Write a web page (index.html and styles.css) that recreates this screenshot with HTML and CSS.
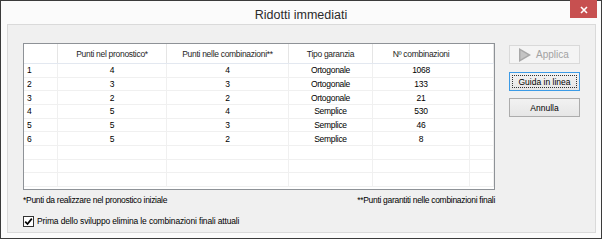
FILE: index.html
```html
<!DOCTYPE html>
<html lang="it">
<head>
    <meta charset="UTF-8">
    <title>Ridotti immediati</title>
    <link rel="stylesheet" href="styles.css">
</head>
<body>

    <div class="window">
        <div class="titlebar">
            <span class="title">Ridotti immediati</span>
            <button class="close" title="Chiudi">
                <svg width="8" height="8" viewBox="0 0 8 8"><path d="M1 1 L7 7 M7 1 L1 7" stroke="#fff" stroke-width="1.6"/></svg>
            </button>
        </div>

        <div class="client">
            <div class="main">
                <div class="left">
                    <div class="grid">
                        <div class="row head">
                            <div class="cell"></div>
                            <div class="cell">Punti nel pronostico*</div>
                            <div class="cell">Punti nelle combinazioni**</div>
                            <div class="cell">Tipo garanzia</div>
                            <div class="cell">Nº combinazioni</div>
                            <div class="cell"></div>
                        </div>
                        <div class="row">
                            <div class="cell">1</div><div class="cell">4</div><div class="cell">4</div>
                            <div class="cell">Ortogonale</div><div class="cell">1068</div><div class="cell"></div>
                        </div>
                        <div class="row">
                            <div class="cell">2</div><div class="cell">3</div><div class="cell">3</div>
                            <div class="cell">Ortogonale</div><div class="cell">133</div><div class="cell"></div>
                        </div>
                        <div class="row">
                            <div class="cell">3</div><div class="cell">2</div><div class="cell">2</div>
                            <div class="cell">Ortogonale</div><div class="cell">21</div><div class="cell"></div>
                        </div>
                        <div class="row">
                            <div class="cell">4</div><div class="cell">5</div><div class="cell">4</div>
                            <div class="cell">Semplice</div><div class="cell">530</div><div class="cell"></div>
                        </div>
                        <div class="row">
                            <div class="cell">5</div><div class="cell">5</div><div class="cell">3</div>
                            <div class="cell">Semplice</div><div class="cell">46</div><div class="cell"></div>
                        </div>
                        <div class="row">
                            <div class="cell">6</div><div class="cell">5</div><div class="cell">2</div>
                            <div class="cell">Semplice</div><div class="cell">8</div><div class="cell"></div>
                        </div>
                        <div class="row">
                            <div class="cell"></div><div class="cell"></div><div class="cell"></div>
                            <div class="cell"></div><div class="cell"></div><div class="cell"></div>
                        </div>
                        <div class="row">
                            <div class="cell"></div><div class="cell"></div><div class="cell"></div>
                            <div class="cell"></div><div class="cell"></div><div class="cell"></div>
                        </div>
                        <div class="row">
                            <div class="cell"></div><div class="cell"></div><div class="cell"></div>
                            <div class="cell"></div><div class="cell"></div><div class="cell"></div>
                        </div>
                    </div>
                    <div class="notes">
                        <span>*Punti da realizzare nel pronostico iniziale</span>
                        <span>**Punti garantiti nelle combinazioni finali</span>
                    </div>
                </div>

                <div class="actions">
                    <button class="btn apply" disabled>
                        <svg width="13" height="14" viewBox="0 0 13 14">
                            <polygon points="1,0 13,7 1,14" fill="#a8a8a8"/>
                            <polygon points="2.5,2.5 10,7 2.5,11.5" fill="#c4c4c4"/>
                        </svg>
                        <span>Applica</span>
                    </button>
                    <button class="btn focus"><span class="focus-ring">Guida in linea</span></button>
                    <button class="btn cancel">Annulla</button>
                </div>
            </div>

            <label class="check">
                <span class="box">
                    <svg width="9" height="9" viewBox="0 0 9 9"><path d="M1.2 4.6 L3.5 7 L7.8 1.6" fill="none" stroke="#000" stroke-width="1.7"/></svg>
                </span>
                Prima dello sviluppo elimina le combinazioni finali attuali
            </label>
        </div>
    </div>

</body>
</html>
```

FILE: styles.css
```css
body {
    margin: 0;
    background: #ffffff;
}

.window {
    box-sizing: border-box;
    width: 602px;
    height: 239px;
    border: 1px solid #3b3b3b;
    background-color: #fbfbfb;
    font-family: 'Liberation Sans', Arial, sans-serif;
    font-size: 8.5px;
    color: #000;
}

.titlebar {
    position: relative;
    height: 23px;
    padding-top: 4px;
    box-sizing: border-box;
    display: flex;
    justify-content: center;
    align-items: center;
}

.title {
    font-size: 12.5px;
    color: #2b2b2b;
}

.close {
    position: absolute;
    top: -1px;
    right: 4px;
    width: 27px;
    height: 18px;
    padding: 0;
    border: none;
    background-color: #c75050;
    display: flex;
    justify-content: center;
    align-items: center;
    padding-top: 2px;
}

.client {
    box-sizing: border-box;
    width: 589px;
    height: 209px;
    margin-left: 6px;
    border: 1px solid #dadada;
    background-color: #f0f0f0;
    padding: 18px 0 0 15px;
}

.main {
    display: flex;
    gap: 14px;
}

.left {
    width: 472px;
    letter-spacing: -0.3px;
}

.grid {
    box-sizing: border-box;
    height: 147px;
    border: 1px solid #8e9297;
    background-color: #ffffff;
    overflow: hidden;
}

.row {
    box-sizing: border-box;
    display: grid;
    grid-template-columns: 34px 109px 122px 84px 97px 24px;
    height: 13.67px;
    border-bottom: 1px solid #f0f0f0;
}

.row.head {
    height: 20px;
    border-bottom-color: #e3e8f0;
}

.cell {
    display: flex;
    justify-content: center;
    align-items: center;
    border-right: 1px solid #f0f0f0;
    white-space: nowrap;
}

.head .cell {
    border-right-color: #e5e5e5;
    color: #1e1e1e;
}

.cell:first-child {
    justify-content: flex-start;
    padding-left: 3px;
}

.notes {
    display: flex;
    justify-content: space-between;
    margin-top: 5px;
    line-height: 11px;
}

.actions {
    display: flex;
    flex-direction: column;
    padding-top: 2px;
}

.btn {
    box-sizing: border-box;
    width: 71px;
    height: 19px;
    padding: 0;
    font-family: inherit;
    font-size: 8.5px;
    color: #000;
    border: 1px solid #acacac;
    background: linear-gradient(#f2f2f2, #e6e6e6);
    display: flex;
    justify-content: center;
    align-items: center;
}

.btn.apply {
    justify-content: flex-start;
    padding-left: 8px;
    gap: 5px;
    border-color: #d9d9d9;
    background: #f4f4f4;
    color: #a2a2a2;
    font-size: 10px;
}

.btn.focus {
    margin-top: 8px;
    border-color: #3c9be6;
    padding: 2px;
}

.focus-ring {
    width: 100%;
    height: 100%;
    box-sizing: border-box;
    border: 1px dotted #333;
    display: flex;
    justify-content: center;
    align-items: center;
}

.btn.cancel {
    margin-top: 7px;
}

.check {
    display: flex;
    align-items: center;
    gap: 3px;
    margin-top: 10px;
    line-height: 11px;
    letter-spacing: -0.15px;
}

.box {
    box-sizing: border-box;
    width: 11px;
    height: 11px;
    border: 1px solid #333;
    background-color: #ffffff;
    display: flex;
    justify-content: center;
    align-items: center;
}
```
